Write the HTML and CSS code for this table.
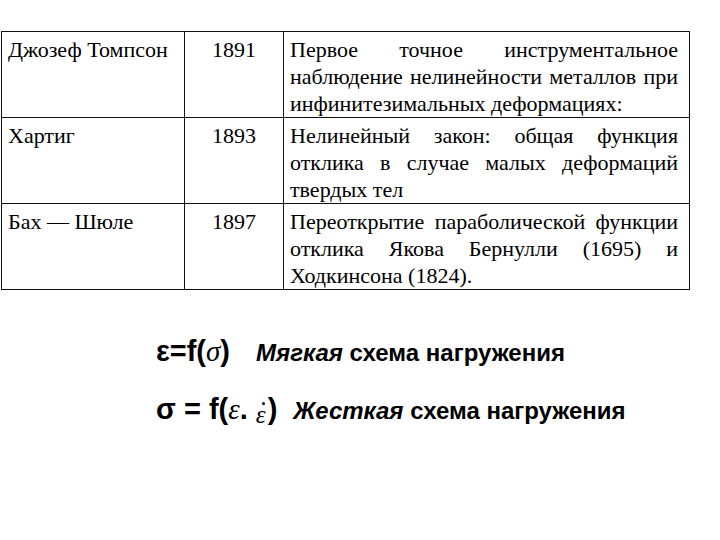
FILE: index.html
```html
<!DOCTYPE html>
<html lang="ru">
<head>
<meta charset="utf-8">
<link rel="stylesheet" href="styles.css">
</head>
<body>
<table class="tbl">
  <colgroup>
    <col class="c-name">
    <col class="c-year">
    <col class="c-desc">
  </colgroup>
  <tr>
    <td class="name">Джозеф Томпсон</td>
    <td class="year">1891</td>
    <td class="desc">Первое точное инструментальное наблюдение нелинейности металлов при инфинитезимальных деформациях:</td>
  </tr>
  <tr>
    <td class="name">Хартиг</td>
    <td class="year">1893</td>
    <td class="desc">Нелинейный закон: общая функция отклика в случае малых деформаций твердых тел</td>
  </tr>
  <tr>
    <td class="name">Бах — Шюле</td>
    <td class="year">1897</td>
    <td class="desc">Переоткрытие параболической функции отклика Якова Бернулли (1695) и Ходкинсона (1824).</td>
  </tr>
</table>

<div class="formulas">
  <div class="frow frow-1">
    <span class="f">ε=f(<i class="sym">σ</i>)</span>
    <span class="lbl"><i>Мягкая</i> схема нагружения</span>
  </div>
  <div class="frow frow-2">
    <span class="f">σ = f(<i class="sym">ε</i>. <i class="sym sm dot">ε</i>)</span>
    <span class="lbl"><i>Жесткая</i> схема нагружения</span>
  </div>
</div>
</body>
</html>
```

FILE: styles.css
```css
html, body {
  margin: 0;
  padding: 0;
  background: #ffffff;
  color: #000000;
}

.tbl {
  margin: 31px 0 0 1px;
  width: 688px;
  border-collapse: collapse;
  table-layout: fixed;
  font-family: "Liberation Serif", "Times New Roman", serif;
  font-size: 22px;
  line-height: 27px;
}

.c-name { width: 183px; }
.c-year { width: 99px; }
.c-desc { width: 406px; }

.tbl td {
  border: 1px solid #111111;
  vertical-align: top;
  padding: 4px 6px 0 6px;
  height: 81px;
}

.tbl td.year {
  text-align: center;
}

.tbl td.desc {
  text-align: justify;
  padding-right: 11px;
}

.formulas {
  margin: 45px 0 0 156px;
  font-family: "Liberation Sans", Arial, sans-serif;
  font-weight: bold;
}

.frow {
  display: flex;
  align-items: baseline;
  height: 58px;
}

.f {
  font-size: 29px;
}

.frow-1 .f { margin-right: 26px; }
.frow-2 .f { margin-right: 16px; }

.sym {
  font-family: "Liberation Serif", "Times New Roman", serif;
  font-style: italic;
  font-weight: normal;
}

.sm {
  font-size: 25px;
}

.dot {
  position: relative;
  display: inline-block;
  vertical-align: -4px;
  margin: 0 2px 0 0;
}

.dot::after {
  content: "";
  position: absolute;
  left: 6px;
  top: 1px;
  width: 3px;
  height: 3px;
  border-radius: 50%;
  background: #000000;
}

.lbl {
  font-size: 24px;
}
```
